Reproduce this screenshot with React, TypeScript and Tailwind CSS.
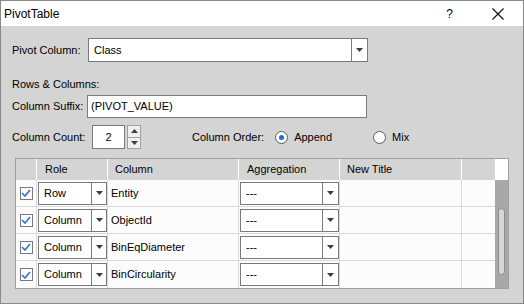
import { ReactNode } from 'react'

const font = { fontFamily: '"Liberation Sans", Arial, sans-serif' }

const Arrow = () => (
  <svg width="7" height="4" viewBox="0 0 7 4" className="block">
    <path d="M0 0h7L3.5 4z" fill="#3c3c3c" />
  </svg>
)

const Combo = ({
  value,
  className,
  buttonWidth = 16
}: {
  value: string
  className: string
  buttonWidth?: number
}) => (
  <div className={`flex border border-[#7a7a7a] bg-white ${className}`}>
    <div className="flex flex-1 items-center pl-[5px] text-black">{value}</div>
    <div
      className="flex items-center justify-center border-l border-[#7a7a7a]"
      style={{ width: buttonWidth }}
    >
      <Arrow />
    </div>
  </div>
)

const Check = () => (
  <div className="flex size-[13px] items-center justify-center border border-[#7a7a7a] bg-white">
    <svg width="10" height="8" viewBox="0 0 10 8">
      <path d="M1 4l3 3 5-6" stroke="#2b73cc" strokeWidth="1.6" fill="none" />
    </svg>
  </div>
)

const Radio = ({ checked }: { checked?: boolean }) => (
  <div className="flex size-[13px] items-center justify-center rounded-full border border-[#5a5a5a] bg-white">
    {checked && <div className="size-[5px] rounded-full bg-[#1f6fd0]" />}
  </div>
)

const Cell = ({ className, children }: { className: string; children?: ReactNode }) => (
  <div className={`flex h-full shrink-0 items-center border-r border-[#d9d9d9] ${className}`}>
    {children}
  </div>
)

const rows = [
  { role: 'Row', column: 'Entity' },
  { role: 'Column', column: 'ObjectId' },
  { role: 'Column', column: 'BinEqDiameter' },
  { role: 'Column', column: 'BinCircularity' }
]

export default function App() {
  return (
    <div
      style={font}
      className="flex h-[304px] w-[524px] flex-col border border-[#8a8a8a] bg-[#d4d4d4] text-[11px] text-black"
    >
      {/* title bar */}
      <div className="flex h-[25px] shrink-0 items-center bg-white pl-[3px] text-[12px]">
        <span>PivotTable</span>
        <span className="ml-auto mr-[39px] text-[12px]">?</span>
        <svg width="12" height="12" viewBox="0 0 12 12" className="mr-[19px]">
          <path d="M0.5 0.5l11 11M11.5 0.5l-11 11" stroke="#111" strokeWidth="1.2" />
        </svg>
      </div>

      <div className="flex flex-1 flex-col pl-[11px]">
        <div className="mt-[12px] flex h-[24px] items-center">
          <span className="w-[76px]">Pivot Column:</span>
          <Combo value="Class" className="h-[24px] w-[280px]" buttonWidth={16} />
        </div>

        <div className="mt-[14px] flex h-[16px] items-center">Rows &amp; Columns:</div>

        <div className="mt-[3px] flex h-[23px] items-center">
          <span className="w-[75px]">Column Suffix:</span>
          <div className="flex h-[23px] w-[280px] items-center border border-[#7a7a7a] bg-white pl-[3px]">
            (PIVOT_VALUE)
          </div>
        </div>

        <div className="mt-[7px] flex h-[24px] items-center">
          <span className="w-[80px]">Column Count:</span>
          <div className="flex h-[24px] w-[33px] items-center justify-center border border-[#7a7a7a] bg-white">
            2
          </div>
          <div className="ml-[2px] flex h-[24px] w-[14px] flex-col">
            <div className="flex flex-1 items-center justify-center border border-[#a0a0a0] bg-[#f0f0f0]">
              <svg width="7" height="4" viewBox="0 0 7 4">
                <path d="M0 4h7L3.5 0z" fill="#3c3c3c" />
              </svg>
            </div>
            <div className="flex flex-1 items-center justify-center border border-t-0 border-[#a0a0a0] bg-[#f0f0f0]">
              <Arrow />
            </div>
          </div>
          <span className="ml-[51px]">Column Order:</span>
          <div className="ml-[11px]">
            <Radio checked />
          </div>
          <span className="ml-[6px]">Append</span>
          <div className="ml-[41px]">
            <Radio />
          </div>
          <span className="ml-[6px]">Mix</span>
        </div>

        {/* table */}
        <div className="ml-[3px] mt-[9px] flex h-[131px] w-[494px] flex-col border border-[#a0a0a0] bg-white">
          <div className="flex h-[21px] shrink-0 bg-[#d4d4d4]">
            <div className="w-[21px] border-r border-white" />
            <div className="flex w-[71px] items-center border-r border-white pl-[8px]">Role</div>
            <div className="flex w-[131px] items-center border-r border-white pl-[7px]">Column</div>
            <div className="flex w-[101px] items-center border-r border-white pl-[8px]">Aggregation</div>
            <div className="flex w-[122px] items-center border-r border-white pl-[7px]">New Title</div>
            <div className="w-[33px]" />
            <div className="flex-1 bg-white" />
          </div>
          <div className="flex flex-1">
            <div className="flex flex-1 flex-col bg-[#fcfcfc]">
              {rows.map((row, i) => (
                <div
                  key={i}
                  className={`flex h-[27px] ${i < rows.length - 1 ? 'border-b border-[#d9d9d9]' : ''}`}
                >
                  <Cell className="w-[21px] justify-center">
                    <Check />
                  </Cell>
                  <Cell className="w-[71px] pl-[1px]">
                    <Combo value={row.role} className="h-[23px] w-[70px]" buttonWidth={15} />
                  </Cell>
                  <Cell className="w-[131px] pl-[3px]">{row.column}</Cell>
                  <Cell className="w-[101px] pl-[1px]">
                    <Combo value="---" className="h-[23px] w-[100px]" buttonWidth={16} />
                  </Cell>
                  <Cell className="w-[122px]" />
                  <Cell className="w-[33px] border-r-0" />
                </div>
              ))}
            </div>
            <div className="flex w-[14px] flex-col bg-[#a8a8a8] px-[3px]">
              <div className="mt-[28px] h-[67px] rounded-full border border-[#8c8c8c] bg-[#d6d6d6]" />
            </div>
          </div>
        </div>
      </div>
    </div>
  )
}
